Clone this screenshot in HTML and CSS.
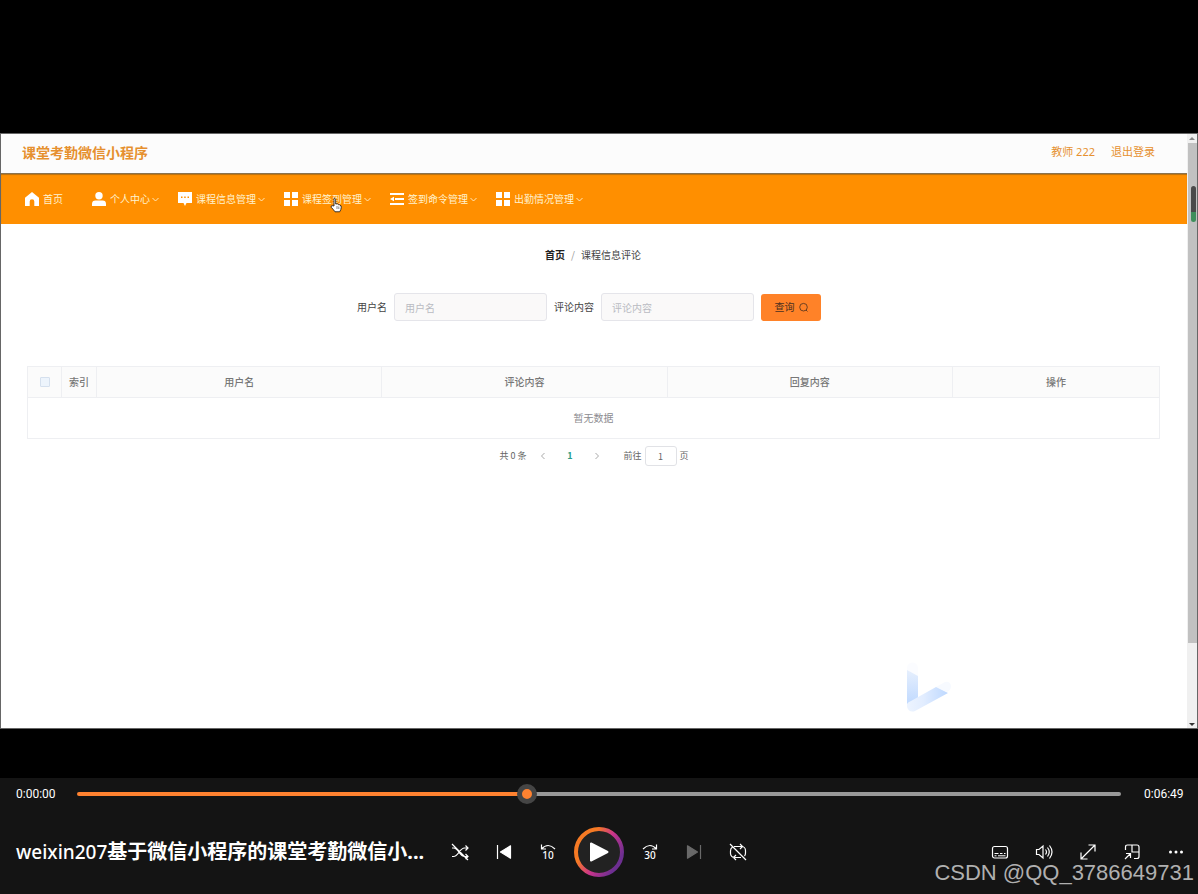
FILE: index.html
```html
<!DOCTYPE html>
<html lang="zh-CN">
<head>
<meta charset="utf-8">
<meta name="viewport" content="width=device-width, initial-scale=1">
<title>课堂考勤微信小程序</title>
<link rel="stylesheet" href="styles.css">
</head>
<body>
<svg class="sprite" aria-hidden="true">
  <symbol id="grid" viewBox="0 0 14 14"><path d="M0 0h6v6H0zM8 0h6v6H8zM0 8h6v6H0zM8 8h6v6H8z"/></symbol>
  <symbol id="down" viewBox="0 0 7 7"><path d="M.5 2l3 3 3-3" fill="none" stroke="currentColor" stroke-width=".9"/></symbol>
</svg>
<main class="stage">
  <div class="video">
    <div class="site">
      <header class="site-header">
        <h1 class="brand">课堂考勤微信小程序</h1>
        <div class="account"><span>教师 222</span><a href="#">退出登录</a></div>
      </header>
      <nav class="menu">
        <a class="menu-item menu-home" href="#"><svg class="menu-icon" viewBox="0 0 14 14"><path d="M7 0l7 5.800V14H9.300V9.500a2.300 2.300 0 0 0-4.600 0V14H0V5.800z"/></svg>首页</a>
        <a class="menu-item" href="#"><svg class="menu-icon" viewBox="0 0 14 14"><circle cx="7" cy="3.700" r="3.700"/><path d="M0 14v-2q0-3.400 3.500-3.400h7Q14 8.600 14 12v2z"/></svg>个人中心<svg class="chevron"><use href="#down"/></svg></a>
        <a class="menu-item" href="#"><svg class="menu-icon" viewBox="0 0 14 14"><path fill-rule="evenodd" d="M0 0h14v11H8.500L7 14l-1.500-3H0zM3 4.500v1.500h1.500V4.500zM6.200 4.500v1.500h1.500V4.500zM9.500 4.500v1.500H11V4.500z"/></svg>课程信息管理<svg class="chevron"><use href="#down"/></svg></a>
        <a class="menu-item" href="#"><svg class="menu-icon"><use href="#grid"/></svg>课程签到管理<svg class="chevron"><use href="#down"/></svg>
          <svg class="pointer" viewBox="0 0 12 16"><path d="M4 9V2.200Q4-.2 5.700 2.200V7q2-.8 2.600.6 1.500-.4 1.700.8 1.500 0 1.300 1.800-.2 2.600-1.600 4.600H5Q3 12 1.200 10.300.6 8.600 2.500 8.700z" fill="#fff" stroke="#222" stroke-width=".9"/><path d="M7 9v3M8.800 9.500V12" stroke="#555" stroke-width=".7"/></svg></a>
        <a class="menu-item" href="#"><svg class="menu-icon" viewBox="0 0 14 14"><path d="M0 1h14v2H0zM5 6h9v2H5zM0 11h14v2H0zM0 7l4-2.300v4.600z"/></svg>签到命令管理<svg class="chevron"><use href="#down"/></svg></a>
        <a class="menu-item" href="#"><svg class="menu-icon"><use href="#grid"/></svg>出勤情况管理<svg class="chevron"><use href="#down"/></svg></a>
      </nav>
      <div class="crumbs"><strong>首页</strong><span class="slash">/</span><span>课程信息评论</span></div>
      <form class="search">
        <label for="user">用户名</label><input id="user" type="text" placeholder="用户名">
        <label for="comment">评论内容</label><input id="comment" type="text" placeholder="评论内容">
        <button type="button">查询<svg class="lens" viewBox="0 0 9 9"><circle cx="4.500" cy="4.200" r="3.800"/><path d="M7 7l1.500 1.500"/></svg></button>
      </form>
      <table class="records">
        <colgroup><col class="c-check"><col class="c-index"><col class="c-wide"><col class="c-wide"><col class="c-wide"><col class="c-action"></colgroup>
        <thead><tr><th><input type="checkbox" aria-label="全选" disabled></th><th>索引</th><th>用户名</th><th>评论内容</th><th>回复内容</th><th>操作</th></tr></thead>
        <tbody><tr><td colspan="6">暂无数据</td></tr></tbody>
      </table>
      <div class="pager">
        <span class="total">共 0 条</span>
        <button type="button" aria-label="上一页"><svg viewBox="0 0 8 8"><path d="M5.500 1l-3 3 3 3"/></svg></button>
        <button type="button" class="current">1</button>
        <button type="button" aria-label="下一页"><svg viewBox="0 0 8 8"><path d="M2.500 1l3 3-3 3"/></svg></button>
        <label class="jump" for="page">前往</label><input id="page" type="text" value="1"><span>页</span>
      </div>
      <svg class="mark" viewBox="0 0 48 52" aria-hidden="true">
        <defs>
          <linearGradient id="stem" x2="0" y2="1"><stop stop-color="#e6effd"/><stop offset="1" stop-color="#bfd9ff"/></linearGradient>
          <linearGradient id="arm"><stop stop-color="#edf4ff"/><stop offset=".4" stop-color="#e2edff"/><stop offset="1" stop-color="#bdd8ff"/></linearGradient>
        </defs>
        <path d="M1 10V7a5.500 5.500 0 0 1 11 0v8z" fill="#fbfcff"/>
        <path d="M1 9l11 6v24L1 44z" fill="url(#stem)"/>
        <path d="M30 26l9-5q5-1 6 4 0 4-4 6z" fill="#f7faff"/>
        <path d="M30 26l12 6L9 50q-6 2-8-4v-3q1-2 4-3z" fill="url(#arm)"/>
      </svg>
    </div>
    <div class="scrollbar" aria-hidden="true">
      <svg viewBox="0 0 10 9"><path d="M2 6l3-3 3 3z" fill="#888"/></svg>
      <div class="scroll-thumb"><div class="level"></div></div>
      <svg class="scroll-end" viewBox="0 0 10 9"><path d="M2 4l3 3 3-3z" fill="#333"/></svg>
    </div>
  </div>
</main>
<footer class="player">
  <div class="timeline">
    <span>0:00:00</span>
    <input type="range" min="0" max="1000" value="430" aria-label="播放进度">
    <span>0:06:49</span>
  </div>
  <div class="controls">
    <h2 class="title"><span class="latin">weixin207</span>基于微信小程序的课堂考勤微信小...</h2>
    <div class="buttons">
      <button type="button" aria-label="随机播放"><svg viewBox="0 0 18 18"><path d="M1 13.500h1.500c5 0 6-8.500 11-8.500H17M1 5h1.500c5 0 6 8.500 11 8.500H17M14.500 2.500L17 5l-2.500 2.500M14.500 11l2.500 2.500-2.500 2.500M1 1l16 16"/></svg></button>
      <button type="button" aria-label="上一个"><svg viewBox="0 0 18 18"><path d="M2.500 2v14"/><path class="solid" d="M15.500 2.800v12.400L5.500 9z"/></svg></button>
      <button type="button" aria-label="后退 10 秒"><svg viewBox="0 0 18 18"><path d="M2.500 1.500v4.500H7M2.500 6Q9-1 16 6"/><text x="9" y="16">10</text></svg></button>
      <button type="button" class="play" aria-label="播放"><svg viewBox="0 0 50 50"><defs><linearGradient id="ring" x1="0" y1=".2" x2="1" y2=".8"><stop offset=".25" stop-color="#f67a24"/><stop offset=".55" stop-color="#ca348b"/><stop offset=".9" stop-color="#6d2f91"/></linearGradient></defs><circle cx="25" cy="25" r="23" fill="#222" stroke="url(#ring)" stroke-width="4"/><path class="solid" d="M17 16.500v17L33.500 25z" stroke-width="2"/></svg></button>
      <button type="button" aria-label="前进 30 秒"><svg viewBox="0 0 18 18"><path d="M15.500 1.500v4.500H11M15.500 6Q9-1 2 6"/><text x="9" y="16">30</text></svg></button>
      <button type="button" class="dim" aria-label="下一个" disabled><svg viewBox="0 0 18 18"><path d="M15.500 2v14"/><path class="solid" d="M2.500 2.800v12.400L12.500 9z"/></svg></button>
      <button type="button" aria-label="循环关闭"><svg viewBox="0 0 18 18"><path d="M5 3.500h7.500a4 4 0 0 1 4 4V10a4.500 4.500 0 0 1-1 3M12 14.500H5.500a4 4 0 0 1-4-4V8a4.500 4.500 0 0 1 2-4M11 1l2.500 2.500L11 6M7 12l-2.500 2.500L7 17M1 1l16 16"/></svg></button>
    </div>
    <div class="buttons tools">
      <button type="button" aria-label="字幕"><svg viewBox="0 0 18 18"><rect x="1.500" y="3.500" width="15" height="11.500" rx="2"/><path d="M3.500 10.500h4M9 10.500h2.500M13 10.500h1.500M3.500 12.800h2M7 12.800h7.500" stroke-width="1"/></svg></button>
      <button type="button" aria-label="音量"><svg viewBox="0 0 18 18"><path d="M1.500 6.500v5H4l4 3.500V3L4 6.500zM10.500 6.500q2 2.500 0 5M12.500 4.500q3.500 4.500 0 9M14.500 2.500q5 6.500 0 13"/></svg></button>
      <button type="button" aria-label="全屏"><svg viewBox="0 0 18 18"><path d="M2 16L16 2M9.500 2H16v6.500M2 9.500V16h6.500"/></svg></button>
      <button type="button" aria-label="迷你播放器"><svg viewBox="0 0 18 18"><path d="M2.500 7V4q0-2 2-2h9.500q2 0 2 2v9.500q0 2-2 2H11M9 2v7h7M2 16l5-5M3 10.500h4.500V15"/></svg></button>
      <button type="button" aria-label="更多"><svg viewBox="0 0 18 18"><g fill="currentColor" stroke="none"><circle cx="3.500" cy="9" r="1.500"/><circle cx="9" cy="9" r="1.500"/><circle cx="14.500" cy="9" r="1.500"/></g></svg></button>
    </div>
  </div>
  <div class="watermark">CSDN @QQ_3786649731</div>
</footer>
</body>
</html>
```
FILE: styles.css
```css
* { box-sizing: border-box; }
body {
  margin: 0;
  min-height: 100vh;
  display: flex;
  flex-direction: column;
  background: #000;
  font-family: "Noto Sans", "Noto Sans CJK SC", sans-serif;
}
button, input { font: inherit; color: inherit; }
button { border: 0; padding: 0; background: none; }
a { color: inherit; text-decoration: none; }
svg { display: block; fill: currentColor; }
.sprite { position: absolute; width: 0; height: 0; }

.stage { flex: 1; display: flex; padding: 133px 0 49px; }
.video {
  flex: 1;
  display: flex;
  background: #fff;
  border: 1px solid #666;
  font-family: "Noto Sans CJK SC", sans-serif;
  font-size: 10px;
  line-height: 14px;
}
.site { flex: 1; position: relative; color: #444; }
.site-header {
  height: 40px;
  display: flex;
  align-items: center;
  justify-content: space-between;
  padding: 0 32px 3px 21px;
  background: #fcfcfc;
  border-bottom: 1px solid #8a7350;
  color: #e6902f;
}
.brand { margin: 0; font-size: 14px; line-height: 20px; font-weight: 700; }
.account { display: flex; gap: 16px; font-family: "Noto Sans", "Noto Sans CJK SC", sans-serif; font-size: 11px; }

.menu {
  height: 50px;
  display: flex;
  align-items: center;
  gap: 19px;
  padding: 0 24px;
  background: #ff8f00;
  box-shadow: inset 0 1px 1px #b87010;
  color: #fff3d0;
}
.menu-item { position: relative; display: flex; align-items: center; white-space: nowrap; }
.menu-home { margin-right: 10px; }
.menu-icon { width: 14px; height: 14px; margin-right: 4px; color: #fff; }
.chevron { width: 7px; height: 7px; margin-left: 2px; }
.pointer { position: absolute; left: 46px; top: 5px; width: 12px; height: 16px; }

.crumbs { display: flex; justify-content: center; margin-top: 24px; padding-right: 2px; gap: 6px; }
.crumbs strong { color: #222; }
.slash { color: #999; }

.search { display: flex; justify-content: center; align-items: center; margin-top: 31px; padding-right: 10px; color: #444; }
.search input {
  width: 153px;
  height: 28px;
  margin: 0 7px;
  padding: 0 10px;
  border: 1px solid #e5e5ea;
  border-radius: 3px;
  background: #faf9f9;
}
.search input::placeholder { color: #b9bbc2; }
.search button {
  display: flex;
  align-items: center;
  justify-content: center;
  gap: 4px;
  width: 60px;
  height: 27px;
  border-radius: 3px;
  background: #ff8228;
  color: #4a3020;
}
.lens { width: 9px; height: 9px; fill: none; stroke: currentColor; stroke-width: .8; overflow: visible; }

.records {
  width: calc(100% - 53px);
  margin: 45px 27px 0 26px;
  table-layout: fixed;
  border-collapse: collapse;
  text-align: center;
}
.records th, .records td { padding: 0; border: 1px solid #eeeff2; }
.records th { height: 31px; background: #fbfbfb; color: #777; font-weight: 500; }
.records td { height: 41px; color: #8c8c90; }
.c-check { width: 34px; }
.c-index { width: 35px; }
.c-action { width: 207px; }
.records input {
  display: block;
  appearance: none;
  width: 10px;
  height: 10px;
  margin: 0 auto;
  border: 1px solid #d5e0ee;
  border-radius: 1px;
  background: #edf4fc;
}

.pager { display: flex; justify-content: center; align-items: center; margin-top: 7px; font-size: 9px; color: #666; }
.total { margin-right: 3px; }
.pager button { width: 27px; height: 20px; }
.pager svg { width: 8px; height: 8px; margin: 0 auto; fill: none; stroke: #aaa; }
.pager .current { color: #2a9d85; font-weight: 700; }
.jump { margin-left: 13px; }
.pager input {
  width: 32px;
  height: 20px;
  margin: 0 3px;
  padding: 0;
  border: 1px solid #e1e2e6;
  border-radius: 3px;
  text-align: center;
}
.mark { position: absolute; right: 233px; bottom: 15px; width: 48px; height: 52px; }

.scrollbar {
  position: relative;
  display: flex;
  flex-direction: column;
  width: 10px;
  background: #f0f0f0;
}
.scrollbar > svg { width: 10px; height: 9px; }
.scroll-thumb { flex: 1; margin: 0 0 76px 1px; background: #c1c1c1; }
.level {
  position: absolute;
  right: 1px;
  top: 52px;
  width: 5px;
  height: 36px;
  border-radius: 3px;
  background: linear-gradient(#4a4a4a 72%, #3f8f5c 72%);
}

.player { position: relative; background: #141414; color: #fff; padding-bottom: 17px; }
.timeline { display: flex; align-items: center; justify-content: space-between; padding: 6px 16px 0; font-family: Roboto, sans-serif; font-size: 12px; line-height: 20px; }
.timeline span { width: 38px; white-space: nowrap; }
.timeline input { flex: 1; height: 20px; margin: 0 23px; appearance: none; background: none; }
.timeline input::-webkit-slider-runnable-track {
  height: 4px;
  border-radius: 2px;
  background: linear-gradient(90deg, #ff8230 43%, #999 43%);
}
.timeline input::-webkit-slider-thumb {
  appearance: none;
  width: 20px;
  height: 20px;
  margin-top: -8px;
  border: 5px solid #454545;
  border-radius: 50%;
  background: #ff8230;
}
.controls { display: grid; grid-template-columns: 1fr auto 1fr; align-items: center; margin-top: 23px; }
.title {
  min-width: 0;
  margin: 0;
  padding-left: 16px;
  overflow: hidden;
  white-space: nowrap;
  font-size: 20px;
  font-weight: 700;
  line-height: 28px;
}
.latin { font-size: 19px; font-weight: 500; }
.buttons { display: flex; align-items: center; }
.buttons button { width: 44px; height: 44px; display: grid; place-items: center; }
.buttons svg { width: 18px; height: 18px; fill: none; stroke: currentColor; stroke-width: 1.2; }
.buttons text { font: 500 10px "Noto Sans", sans-serif; fill: currentColor; stroke: none; text-anchor: middle; }
.buttons .solid { fill: currentColor; stroke-linejoin: round; }
.buttons .play { width: 50px; height: 50px; margin: 0 4px; }
.play svg { width: 50px; height: 50px; }
.play circle { stroke-width: 4; }
.buttons .dim { color: #696969; }
.tools { justify-content: flex-end; }
.watermark {
  position: absolute;
  right: 4px;
  bottom: 6px;
  color: #b0b0b0;
  font-family: "Liberation Sans", sans-serif;
  font-size: 22px;
  line-height: 30px;
}
```
